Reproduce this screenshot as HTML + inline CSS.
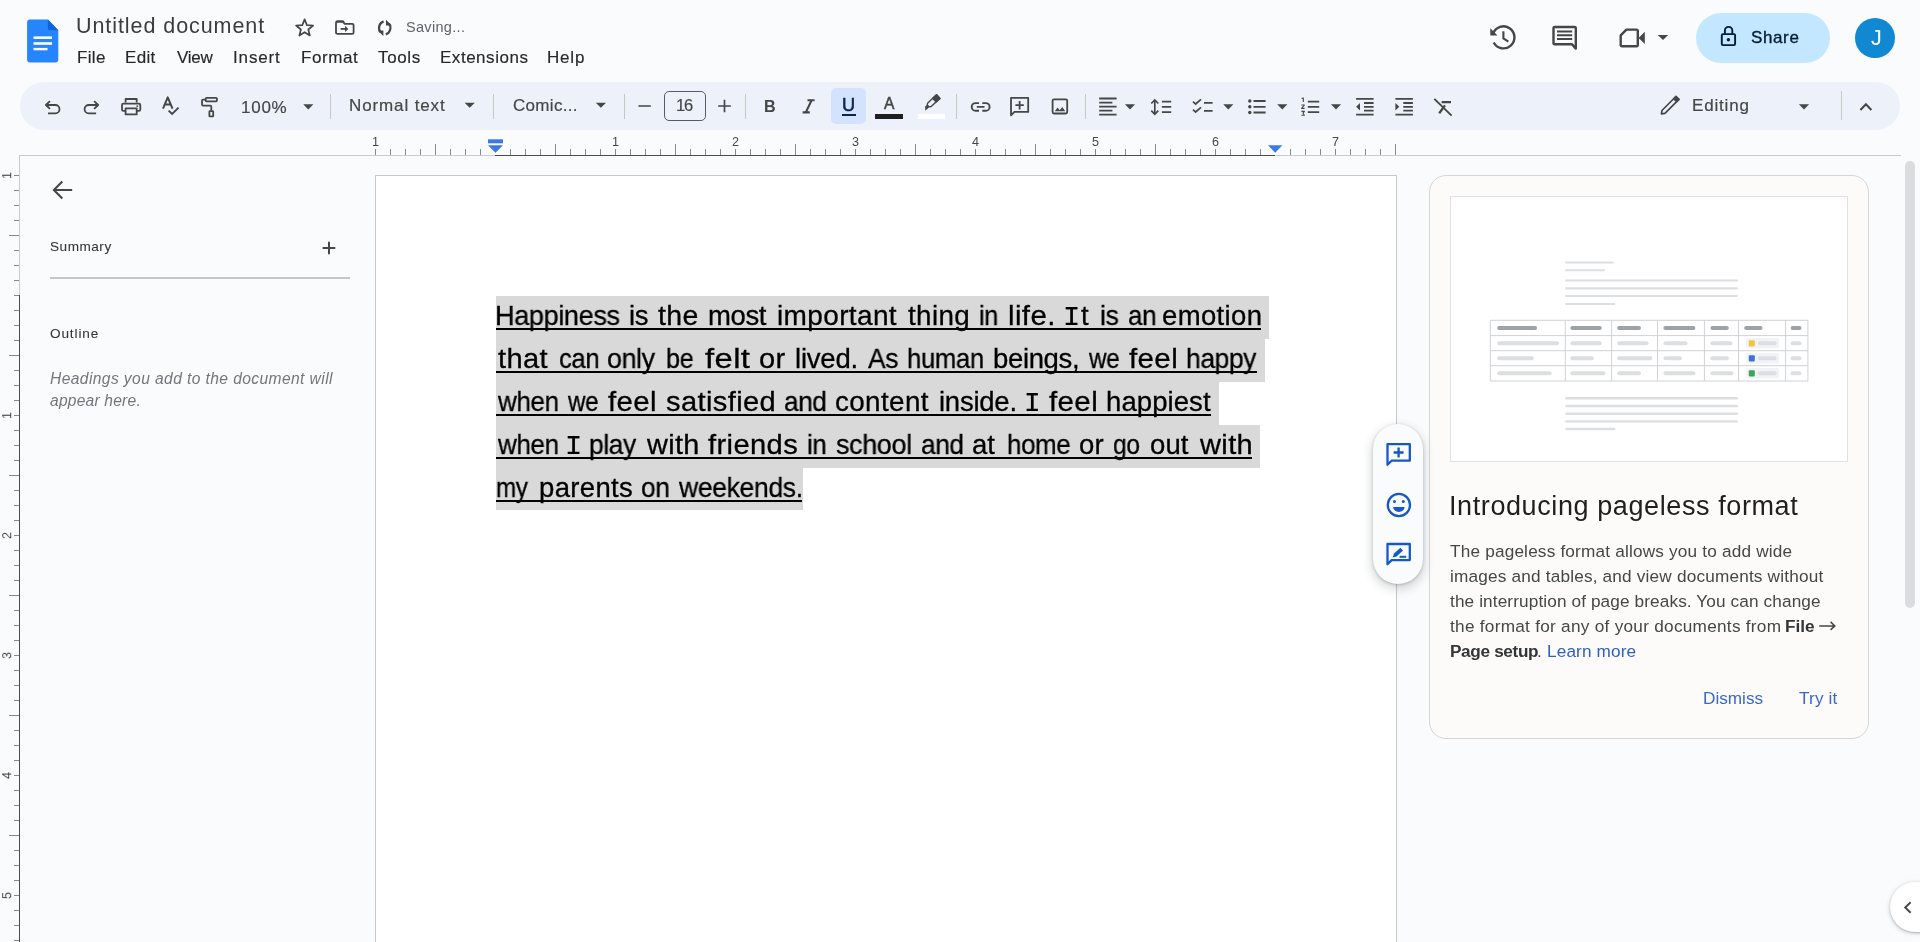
<!DOCTYPE html>
<html><head><meta charset="utf-8"><title>Untitled document - Google Docs</title>
<style>
*{margin:0;padding:0;box-sizing:border-box}
html,body{width:1920px;height:942px;overflow:hidden;background:#f9fbfd;font-family:"Liberation Sans",sans-serif}
.a{position:absolute}
.t{position:absolute;white-space:pre;line-height:1;font-family:"Liberation Sans",sans-serif;will-change:transform}
svg{position:absolute;overflow:visible}
.sep{position:absolute;width:1px;background:#c7c7c7}
</style></head><body>
<!-- toolbar pill -->
<div class="a" style="left:20px;top:82px;width:1880px;height:48px;border-radius:24px;background:#edf2fa"></div>
<!-- share + avatar -->
<div class="a" style="left:1696px;top:13px;width:134px;height:50px;border-radius:25px;background:#c2e7ff"></div>
<div class="a" style="left:1855px;top:18px;width:40px;height:40px;border-radius:20px;background:#1188d2"></div>
<!-- toolbar separators -->
<div class="sep" style="left:330px;top:94px;height:25px"></div>
<div class="sep" style="left:493px;top:94px;height:25px"></div>
<div class="sep" style="left:624px;top:94px;height:25px"></div>
<div class="sep" style="left:745px;top:94px;height:25px"></div>
<div class="sep" style="left:956px;top:94px;height:25px"></div>
<div class="sep" style="left:1085px;top:94px;height:25px"></div>
<div class="sep" style="left:1841px;top:91px;height:29px"></div>
<!-- font size box -->
<div class="a" style="left:664px;top:91px;width:42px;height:30px;border:1px solid #5a5d60;border-radius:5px"></div>
<!-- underline active bg -->
<div class="a" style="left:831px;top:88px;width:35px;height:36px;border-radius:5px;background:#d3e3fd"></div>
<!-- U underline, A bar, highlighter bar -->
<div class="a" style="left:841.6px;top:113.6px;width:14px;height:2.1px;background:#0a2350"></div>
<div class="a" style="left:875px;top:114px;width:28px;height:5px;background:#1f1f1f"></div>
<div class="a" style="left:917.5px;top:114.3px;width:27px;height:4.7px;background:#ffffff"></div>

<!-- ruler separator line -->
<div class="a" style="left:19px;top:155px;width:1882px;height:1px;background:#c9cccf"></div>
<svg style="left:0;top:0" width="1920" height="160" shape-rendering="crispEdges">
<rect x="495" y="155" width="780" height="1" fill="#4a4d50"/>
<rect x="375" y="149" width="1" height="6" fill="#85888c"/>
<rect x="390" y="149" width="1" height="6" fill="#85888c"/>
<rect x="405" y="149" width="1" height="6" fill="#85888c"/>
<rect x="420" y="149" width="1" height="6" fill="#85888c"/>
<rect x="435" y="144" width="1" height="11" fill="#85888c"/>
<rect x="450" y="149" width="1" height="6" fill="#85888c"/>
<rect x="465" y="149" width="1" height="6" fill="#85888c"/>
<rect x="480" y="149" width="1" height="6" fill="#85888c"/>
<rect x="510" y="149" width="1" height="6" fill="#85888c"/>
<rect x="525" y="149" width="1" height="6" fill="#85888c"/>
<rect x="540" y="149" width="1" height="6" fill="#85888c"/>
<rect x="555" y="144" width="1" height="11" fill="#85888c"/>
<rect x="570" y="149" width="1" height="6" fill="#85888c"/>
<rect x="585" y="149" width="1" height="6" fill="#85888c"/>
<rect x="600" y="149" width="1" height="6" fill="#85888c"/>
<rect x="615" y="149" width="1" height="6" fill="#85888c"/>
<rect x="630" y="149" width="1" height="6" fill="#85888c"/>
<rect x="645" y="149" width="1" height="6" fill="#85888c"/>
<rect x="660" y="149" width="1" height="6" fill="#85888c"/>
<rect x="675" y="144" width="1" height="11" fill="#85888c"/>
<rect x="690" y="149" width="1" height="6" fill="#85888c"/>
<rect x="705" y="149" width="1" height="6" fill="#85888c"/>
<rect x="720" y="149" width="1" height="6" fill="#85888c"/>
<rect x="735" y="149" width="1" height="6" fill="#85888c"/>
<rect x="750" y="149" width="1" height="6" fill="#85888c"/>
<rect x="765" y="149" width="1" height="6" fill="#85888c"/>
<rect x="780" y="149" width="1" height="6" fill="#85888c"/>
<rect x="795" y="144" width="1" height="11" fill="#85888c"/>
<rect x="810" y="149" width="1" height="6" fill="#85888c"/>
<rect x="825" y="149" width="1" height="6" fill="#85888c"/>
<rect x="840" y="149" width="1" height="6" fill="#85888c"/>
<rect x="855" y="149" width="1" height="6" fill="#85888c"/>
<rect x="870" y="149" width="1" height="6" fill="#85888c"/>
<rect x="885" y="149" width="1" height="6" fill="#85888c"/>
<rect x="900" y="149" width="1" height="6" fill="#85888c"/>
<rect x="915" y="144" width="1" height="11" fill="#85888c"/>
<rect x="930" y="149" width="1" height="6" fill="#85888c"/>
<rect x="945" y="149" width="1" height="6" fill="#85888c"/>
<rect x="960" y="149" width="1" height="6" fill="#85888c"/>
<rect x="975" y="149" width="1" height="6" fill="#85888c"/>
<rect x="990" y="149" width="1" height="6" fill="#85888c"/>
<rect x="1005" y="149" width="1" height="6" fill="#85888c"/>
<rect x="1020" y="149" width="1" height="6" fill="#85888c"/>
<rect x="1035" y="144" width="1" height="11" fill="#85888c"/>
<rect x="1050" y="149" width="1" height="6" fill="#85888c"/>
<rect x="1065" y="149" width="1" height="6" fill="#85888c"/>
<rect x="1080" y="149" width="1" height="6" fill="#85888c"/>
<rect x="1095" y="149" width="1" height="6" fill="#85888c"/>
<rect x="1110" y="149" width="1" height="6" fill="#85888c"/>
<rect x="1125" y="149" width="1" height="6" fill="#85888c"/>
<rect x="1140" y="149" width="1" height="6" fill="#85888c"/>
<rect x="1155" y="144" width="1" height="11" fill="#85888c"/>
<rect x="1170" y="149" width="1" height="6" fill="#85888c"/>
<rect x="1185" y="149" width="1" height="6" fill="#85888c"/>
<rect x="1200" y="149" width="1" height="6" fill="#85888c"/>
<rect x="1215" y="149" width="1" height="6" fill="#85888c"/>
<rect x="1230" y="149" width="1" height="6" fill="#85888c"/>
<rect x="1245" y="149" width="1" height="6" fill="#85888c"/>
<rect x="1260" y="149" width="1" height="6" fill="#85888c"/>
<rect x="1290" y="149" width="1" height="6" fill="#85888c"/>
<rect x="1305" y="149" width="1" height="6" fill="#85888c"/>
<rect x="1320" y="149" width="1" height="6" fill="#85888c"/>
<rect x="1335" y="149" width="1" height="6" fill="#85888c"/>
<rect x="1350" y="149" width="1" height="6" fill="#85888c"/>
<rect x="1365" y="149" width="1" height="6" fill="#85888c"/>
<rect x="1380" y="149" width="1" height="6" fill="#85888c"/>
<rect x="1395" y="144" width="1" height="11" fill="#85888c"/>
</svg>
<svg style="left:0;top:0" width="1920" height="160"><rect x="488" y="139.3" width="15" height="4" fill="#3c78e6"/><path d="M488 145.2H503L495.5 152.8Z" fill="#3c78e6"/><path d="M1268 145.2H1282.4L1275.2 152.8Z" fill="#3c78e6"/></svg>
<svg style="left:0;top:0" width="30" height="942" shape-rendering="crispEdges">
<rect x="19" y="155" width="1" height="140" fill="#c9cccf"/>
<rect x="19" y="295" width="1" height="650" fill="#4a4d50"/>
<rect x="14" y="175" width="5" height="1" fill="#85888c"/>
<rect x="14" y="190" width="5" height="1" fill="#85888c"/>
<rect x="14" y="205" width="5" height="1" fill="#85888c"/>
<rect x="14" y="220" width="5" height="1" fill="#85888c"/>
<rect x="9" y="235" width="10" height="1" fill="#85888c"/>
<rect x="14" y="250" width="5" height="1" fill="#85888c"/>
<rect x="14" y="265" width="5" height="1" fill="#85888c"/>
<rect x="14" y="280" width="5" height="1" fill="#85888c"/>
<rect x="14" y="295" width="5" height="1" fill="#85888c"/>
<rect x="14" y="310" width="5" height="1" fill="#85888c"/>
<rect x="14" y="325" width="5" height="1" fill="#85888c"/>
<rect x="14" y="340" width="5" height="1" fill="#85888c"/>
<rect x="9" y="355" width="10" height="1" fill="#85888c"/>
<rect x="14" y="370" width="5" height="1" fill="#85888c"/>
<rect x="14" y="385" width="5" height="1" fill="#85888c"/>
<rect x="14" y="400" width="5" height="1" fill="#85888c"/>
<rect x="14" y="415" width="5" height="1" fill="#85888c"/>
<rect x="14" y="430" width="5" height="1" fill="#85888c"/>
<rect x="14" y="445" width="5" height="1" fill="#85888c"/>
<rect x="14" y="460" width="5" height="1" fill="#85888c"/>
<rect x="9" y="475" width="10" height="1" fill="#85888c"/>
<rect x="14" y="490" width="5" height="1" fill="#85888c"/>
<rect x="14" y="505" width="5" height="1" fill="#85888c"/>
<rect x="14" y="520" width="5" height="1" fill="#85888c"/>
<rect x="14" y="535" width="5" height="1" fill="#85888c"/>
<rect x="14" y="550" width="5" height="1" fill="#85888c"/>
<rect x="14" y="565" width="5" height="1" fill="#85888c"/>
<rect x="14" y="580" width="5" height="1" fill="#85888c"/>
<rect x="9" y="595" width="10" height="1" fill="#85888c"/>
<rect x="14" y="610" width="5" height="1" fill="#85888c"/>
<rect x="14" y="625" width="5" height="1" fill="#85888c"/>
<rect x="14" y="640" width="5" height="1" fill="#85888c"/>
<rect x="14" y="655" width="5" height="1" fill="#85888c"/>
<rect x="14" y="670" width="5" height="1" fill="#85888c"/>
<rect x="14" y="685" width="5" height="1" fill="#85888c"/>
<rect x="14" y="700" width="5" height="1" fill="#85888c"/>
<rect x="9" y="715" width="10" height="1" fill="#85888c"/>
<rect x="14" y="730" width="5" height="1" fill="#85888c"/>
<rect x="14" y="745" width="5" height="1" fill="#85888c"/>
<rect x="14" y="760" width="5" height="1" fill="#85888c"/>
<rect x="14" y="775" width="5" height="1" fill="#85888c"/>
<rect x="14" y="790" width="5" height="1" fill="#85888c"/>
<rect x="14" y="805" width="5" height="1" fill="#85888c"/>
<rect x="14" y="820" width="5" height="1" fill="#85888c"/>
<rect x="9" y="835" width="10" height="1" fill="#85888c"/>
<rect x="14" y="850" width="5" height="1" fill="#85888c"/>
<rect x="14" y="865" width="5" height="1" fill="#85888c"/>
<rect x="14" y="880" width="5" height="1" fill="#85888c"/>
<rect x="14" y="895" width="5" height="1" fill="#85888c"/>
<rect x="14" y="910" width="5" height="1" fill="#85888c"/>
<rect x="14" y="925" width="5" height="1" fill="#85888c"/>
<rect x="14" y="940" width="5" height="1" fill="#85888c"/>
</svg>
<span class="t" style="left:0;top:0;font-size:12.6px;color:#444746;transform-origin:0 0;transform:translate(1.2px,179.0px) rotate(-90deg)">1</span>
<span class="t" style="left:0;top:0;font-size:12.6px;color:#444746;transform-origin:0 0;transform:translate(1.2px,419.0px) rotate(-90deg)">1</span>
<span class="t" style="left:0;top:0;font-size:12.6px;color:#444746;transform-origin:0 0;transform:translate(1.2px,539.0px) rotate(-90deg)">2</span>
<span class="t" style="left:0;top:0;font-size:12.6px;color:#444746;transform-origin:0 0;transform:translate(1.2px,659.0px) rotate(-90deg)">3</span>
<span class="t" style="left:0;top:0;font-size:12.6px;color:#444746;transform-origin:0 0;transform:translate(1.2px,779.0px) rotate(-90deg)">4</span>
<span class="t" style="left:0;top:0;font-size:12.6px;color:#444746;transform-origin:0 0;transform:translate(1.2px,899.0px) rotate(-90deg)">5</span>

<!-- page -->
<div class="a" style="left:375px;top:175px;width:1022px;height:800px;background:#fff;border:1px solid #c8c8c8"></div>
<!-- selection -->
<div class="a" style="left:496px;top:296px;width:772.5px;height:43px;background:#d9d9d9"></div>
<div class="a" style="left:496px;top:339px;width:769.3px;height:43px;background:#d9d9d9"></div>
<div class="a" style="left:496px;top:382px;width:723px;height:43px;background:#d9d9d9"></div>
<div class="a" style="left:496px;top:425px;width:764.4px;height:43px;background:#d9d9d9"></div>
<div class="a" style="left:496px;top:468px;width:307px;height:42px;background:#d9d9d9"></div>
<!-- underlines -->
<div class="a" style="left:496px;top:327.6px;width:765px;height:2px;background:#000"></div>
<div class="a" style="left:496px;top:370.6px;width:760.6px;height:2px;background:#000"></div>
<div class="a" style="left:496px;top:413.6px;width:715.2px;height:2px;background:#000"></div>
<div class="a" style="left:496px;top:456.6px;width:756px;height:2px;background:#000"></div>
<div class="a" style="left:496px;top:499.6px;width:306px;height:2px;background:#000"></div>

<!-- left panel divider -->
<div class="a" style="left:50px;top:276.6px;width:300px;height:2px;background:#c4c7c5"></div>

<!-- right card -->
<div class="a" style="left:1429px;top:175px;width:440px;height:564px;border:1px solid #d6d6d6;border-radius:17px;background:#fcfbfa"></div>
<div class="a" style="left:1450px;top:196px;width:398px;height:266px;border:1px solid #dfe1e4;background:#fff"></div>
<svg style="left:0;top:0" width="1920" height="942">
<rect x="1565.0" y="261.6" width="49.0" height="2" rx="1.0" fill="#dcdee1"/>
<rect x="1565.0" y="269.3" width="40.0" height="2" rx="1.0" fill="#dcdee1"/>
<rect x="1565.0" y="279.4" width="173.0" height="2.2" rx="1.1" fill="#dcdee1"/>
<rect x="1565.0" y="287.2" width="173.0" height="2.2" rx="1.1" fill="#dcdee1"/>
<rect x="1565.0" y="294.9" width="173.0" height="2.2" rx="1.1" fill="#dcdee1"/>
<rect x="1565.0" y="302.9" width="50.3" height="2.2" rx="1.1" fill="#dcdee1"/>
<rect x="1565.3" y="397.1" width="172.7" height="2.4" rx="1.2" fill="#dcdee1"/>
<rect x="1565.3" y="404.8" width="172.7" height="2.4" rx="1.2" fill="#dcdee1"/>
<rect x="1565.3" y="412.5" width="172.7" height="2.4" rx="1.2" fill="#dcdee1"/>
<rect x="1565.3" y="420.2" width="172.7" height="2.4" rx="1.2" fill="#dcdee1"/>
<rect x="1565.3" y="427.8" width="50.0" height="2.4" rx="1.2" fill="#dcdee1"/>
<rect x="1489.8" y="320.3" width="1" height="60.7" fill="#d0d2d5"/>
<rect x="1564.8" y="320.3" width="1" height="60.7" fill="#d0d2d5"/>
<rect x="1611.1" y="320.3" width="1" height="60.7" fill="#d0d2d5"/>
<rect x="1657.0" y="320.3" width="1" height="60.7" fill="#d0d2d5"/>
<rect x="1703.9" y="320.3" width="1" height="60.7" fill="#d0d2d5"/>
<rect x="1738.0" y="320.3" width="1" height="60.7" fill="#d0d2d5"/>
<rect x="1785.1" y="320.3" width="1" height="60.7" fill="#d0d2d5"/>
<rect x="1807.4" y="320.3" width="1" height="60.7" fill="#d0d2d5"/>
<rect x="1490.25" y="319.8" width="317.7" height="1" fill="#d0d2d5"/>
<rect x="1490.25" y="335.1" width="317.7" height="1" fill="#d0d2d5"/>
<rect x="1490.25" y="350.2" width="317.7" height="1" fill="#d0d2d5"/>
<rect x="1490.25" y="365.2" width="317.7" height="1" fill="#d0d2d5"/>
<rect x="1490.25" y="380.5" width="317.7" height="1" fill="#d0d2d5"/>
<rect x="1497.2" y="326.1" width="39.9" height="4" rx="2.0" fill="#9da2a7"/>
<rect x="1570.3" y="326.1" width="31.5" height="4" rx="2.0" fill="#9da2a7"/>
<rect x="1617.2" y="326.1" width="23.8" height="4" rx="2.0" fill="#9da2a7"/>
<rect x="1663.5" y="326.1" width="31.9" height="4" rx="2.0" fill="#9da2a7"/>
<rect x="1710.4" y="326.1" width="18.4" height="4" rx="2.0" fill="#9da2a7"/>
<rect x="1744.1" y="326.1" width="18.4" height="4" rx="2.0" fill="#9da2a7"/>
<rect x="1790.6" y="326.1" width="10.9" height="4" rx="2.0" fill="#9da2a7"/>
<rect x="1497.2" y="341.3" width="61.8" height="4" rx="2.0" fill="#dcdee1"/>
<rect x="1570.3" y="341.3" width="31.5" height="4" rx="2.0" fill="#dcdee1"/>
<rect x="1617.2" y="341.3" width="31.3" height="4" rx="2.0" fill="#dcdee1"/>
<rect x="1663.5" y="341.3" width="24.0" height="4" rx="2.0" fill="#dcdee1"/>
<rect x="1710.4" y="341.3" width="22.1" height="4" rx="2.0" fill="#dcdee1"/>
<rect x="1790.6" y="341.3" width="10.9" height="4" rx="2.0" fill="#dcdee1"/>
<rect x="1746.2" y="338.1" width="33" height="10.4" rx="2" fill="#f1f3f4"/>
<rect x="1748.8" y="340.2" width="6" height="6.2" rx="1" fill="#f5c344"/>
<rect x="1757.8" y="341.3" width="18.8" height="4" rx="2.0" fill="#dcdee1"/>
<rect x="1497.2" y="356.3" width="36.6" height="4" rx="2.0" fill="#dcdee1"/>
<rect x="1570.3" y="356.3" width="23.5" height="4" rx="2.0" fill="#dcdee1"/>
<rect x="1617.2" y="356.3" width="35.1" height="4" rx="2.0" fill="#dcdee1"/>
<rect x="1663.5" y="356.3" width="18.4" height="4" rx="2.0" fill="#dcdee1"/>
<rect x="1710.4" y="356.3" width="18.4" height="4" rx="2.0" fill="#dcdee1"/>
<rect x="1790.6" y="356.3" width="10.9" height="4" rx="2.0" fill="#dcdee1"/>
<rect x="1746.2" y="353.1" width="33" height="10.4" rx="2" fill="#f1f3f4"/>
<rect x="1748.8" y="355.2" width="6" height="6.2" rx="1" fill="#3f72d8"/>
<rect x="1757.8" y="356.3" width="18.8" height="4" rx="2.0" fill="#dcdee1"/>
<rect x="1497.2" y="371.3" width="54.4" height="4" rx="2.0" fill="#dcdee1"/>
<rect x="1570.3" y="371.3" width="35.1" height="4" rx="2.0" fill="#dcdee1"/>
<rect x="1617.2" y="371.3" width="23.8" height="4" rx="2.0" fill="#dcdee1"/>
<rect x="1663.5" y="371.3" width="31.9" height="4" rx="2.0" fill="#dcdee1"/>
<rect x="1710.4" y="371.3" width="23.0" height="4" rx="2.0" fill="#dcdee1"/>
<rect x="1790.6" y="371.3" width="10.9" height="4" rx="2.0" fill="#dcdee1"/>
<rect x="1746.2" y="368.1" width="33" height="10.4" rx="2" fill="#f1f3f4"/>
<rect x="1748.8" y="370.2" width="6" height="6.2" rx="1" fill="#3fa25c"/>
<rect x="1757.8" y="371.3" width="18.8" height="4" rx="2.0" fill="#dcdee1"/>
</svg>

<!-- floating pill -->
<div class="a" style="left:1373px;top:424px;width:50px;height:160px;border-radius:25px;background:#f9fbfd;box-shadow:0 1px 3px rgba(60,64,67,.30),0 4px 8px 3px rgba(60,64,67,.15)"></div>
<!-- scrollbar -->
<div class="a" style="left:1905px;top:161px;width:10px;height:447px;border-radius:5px;background:#dadce0"></div>
<!-- bottom right expand -->
<div class="a" style="left:1890px;top:882px;width:60px;height:50px;border-radius:25px;background:#fff;box-shadow:0 1px 2px rgba(60,64,67,.30),0 1px 4px 1px rgba(60,64,67,.14)"></div>

<svg style="left:0;top:0" width="1920" height="942" fill="none" stroke-linecap="butt" stroke-linejoin="round">
<!-- Docs logo -->
<path d="M30.1 19.6H47.9L58.3 30.2V59.5a3 3 0 0 1-3 3H30.1a3 3 0 0 1-3-3V22.6a3 3 0 0 1 3-3Z" fill="#2684fc"/>
<path d="M47.9 19.6L58.3 30.2H50.4a2.5 2.5 0 0 1-2.5-2.5Z" fill="#0b64d8"/>
<rect x="33.5" y="36.4" width="18.5" height="2.6" fill="#fff"/><rect x="33.5" y="42.2" width="18.5" height="2.6" fill="#fff"/><rect x="33.5" y="47.9" width="14" height="2.4" fill="#fff"/>

<g stroke="#444746" stroke-width="1.8">
<!-- star -->
<path d="M304.6 19.4L306.9 25.1L313.1 25.5L308.3 29.5L309.8 35.5L304.6 32.2L299.4 35.5L300.9 29.5L296.1 25.5L302.3 25.1Z" stroke-width="1.7" stroke-linejoin="round"/>
<!-- folder move -->
<path d="M336 23.2a1.4 1.4 0 0 1 1.4-1.4H342.8L344.8 23.9H352.2a1.4 1.4 0 0 1 1.4 1.4V32.4a1.4 1.4 0 0 1-1.4 1.4H337.4a1.4 1.4 0 0 1-1.4-1.4Z"/>
<path d="M336 22.6a1.6 1.6 0 0 1 1.6-1.6H342.4a1.6 1.6 0 0 1 1.6 1.6" stroke-width="1.4"/>
<path d="M340.6 28.9H346.5" stroke-width="1.8"/><path d="M345 25.8L348.4 28.9L345 32Z" fill="#444746" stroke="none"/>
<!-- sync -->
<path d="M383.6 21.4A7 7 0 0 0 380.6 32.4" stroke-width="2.2"/>
<path d="M377.6 30.4H383.4V36Z" fill="#444746" stroke="none"/>
<path d="M385.8 34.4A7 7 0 0 0 388.8 23.4" stroke-width="2.2"/>
<path d="M391.8 25.4H386V19.8Z" fill="#444746" stroke="none"/>

<!-- undo / redo -->
<path d="M50 101.1L45.9 105L50 108.9M46.2 105H55.3A4.2 4.2 0 0 1 55.3 113.4H48"/>
<path d="M94.1 101.1L98.2 105L94.1 108.9M97.9 105H88.8A4.2 4.2 0 0 0 88.8 113.4H96.1"/>
<!-- print -->
<path d="M125.6 102.6V99H136.7V102.6"/>
<path d="M125.6 110.8H123.4a1.4 1.4 0 0 1-1.4-1.4V105a1.4 1.4 0 0 1 1.4-1.4H138.9a1.4 1.4 0 0 1 1.4 1.4V109.4a1.4 1.4 0 0 1-1.4 1.4H136.7"/>
<rect x="125.6" y="108.3" width="11.1" height="6.1"/>
<circle cx="137.3" cy="106.2" r="0.9" fill="#444746" stroke="none"/>
<!-- spellcheck -->
<path d="M163 108.7L167.75 97.3L172.5 108.7M164.9 104.4H170.6" stroke-width="2" stroke-linejoin="round"/>
<path d="M168.6 110.6L172.1 114L178.6 107.6" stroke-width="1.9" stroke-linejoin="miter"/>
<!-- paint format -->
<rect x="205.7" y="97.8" width="11.2" height="3.6" rx="0.8"/>
<path d="M205.7 99.6H203a1 1 0 0 0-1 1V104.6a1 1 0 0 0 1 1H210.3a1 1 0 0 1 1 1V110.6"/>
<rect x="209.4" y="111.2" width="3.8" height="5.2" rx="0.5"/>

<!-- minus / plus -->
<path d="M638.4 106H650.8M718.2 106H730.8M724.5 99.8V112.3" stroke-width="1.7"/>
<!-- italic I -->
<path d="M807.5 100.2H814.6M802.6 112.4H809.8M811.6 100.2L805.8 112.4" stroke-width="2.1"/>
<!-- highlighter -->
<g transform="translate(931.2,103.1) rotate(47)">
<path d="M-2.5 -9.6H2.5V2.4L1.3 4.2H-1.3L-2.5 2.4Z" stroke-width="1.4"/>
<rect x="-2.5" y="-9.6" width="5" height="5.2" fill="#444746" stroke-width="1.4"/>
<path d="M-1.6 4.4H1.6V9.6L-1.6 6.8Z" fill="#444746" stroke="none"/>
</g>
<!-- link -->
<path d="M979 103.1H975.5A3.8 3.8 0 0 0 975.5 110.7H979M982.3 103.1H985.8A3.8 3.8 0 0 1 985.8 110.7H982.3M976.8 106.9H984.5" stroke-width="1.9"/>
<!-- add comment -->
<path d="M1011 97.8H1028.2V111.9H1014.4L1011 115.4Z"/>
<path d="M1015.4 105.2H1023.8M1019.6 101V109.4"/>
<!-- image -->
<rect x="1052.6" y="99.4" width="14.6" height="14.1" rx="1.4"/>
<path d="M1054.8 111.2L1057.6 107.6L1059.7 110.2L1062.3 106.9L1065.2 111.2Z" fill="#444746" stroke="none"/>
<!-- align -->
<path d="M1099.2 98.5H1116.6M1099.2 102.6H1112.4M1099.2 106.7H1116.6M1099.2 110.7H1112.4M1099.2 114.7H1116.6"/>
<!-- line spacing -->
<path d="M1154.8 101V113.2" stroke-width="1.7"/><path d="M1151.3 103.5L1154.8 100L1158.3 103.5M1151.3 110.7L1154.8 114.2L1158.3 110.7" stroke-width="1.7" stroke-linejoin="miter"/>
<path d="M1161.9 101.6H1171.2M1161.9 106.8H1171.2M1161.9 112.1H1171.2"/>
<!-- checklist -->
<path d="M1193 101.6L1195.6 104L1201 99.4M1193 109.6L1195.6 112L1201 107.4" stroke-width="1.7" stroke-linejoin="miter"/>
<path d="M1204 102.8H1212.6M1204 110.8H1212.6"/>
<!-- bullets -->
<path d="M1253.5 101H1265.6M1253.5 106.8H1265.6M1253.5 112.5H1265.6"/>
<g fill="#444746" stroke="none"><circle cx="1249.8" cy="101" r="1.7"/><circle cx="1249.8" cy="106.8" r="1.7"/><circle cx="1249.8" cy="112.5" r="1.7"/></g>
<!-- numbered -->
<path d="M1307.8 101.6H1319.2M1307.8 106.8H1319.2M1307.8 112.2H1319.2"/>
<path d="M1301.6 98.6L1303.3 98V102M1301.4 105H1304.4L1301.6 108.4H1304.6M1301.4 111.4H1304.4L1303 113.2L1304.4 115.2H1301.4" stroke-width="1.1"/>
<!-- decrease indent -->
<path d="M1356.1 98.8H1373.6M1356.1 114.7H1373.6M1364 103H1373.6M1364 106.8H1373.6M1364 110.6H1373.6"/>
<path d="M1360 103L1356.1 106.8L1360 110.6Z" fill="#444746" stroke="none"/>
<!-- increase indent -->
<path d="M1395.4 98.8H1412.9M1395.4 114.7H1412.9M1403.3 103H1412.9M1403.3 106.8H1412.9M1403.3 110.6H1412.9"/>
<path d="M1395.4 103L1399.3 106.8L1395.4 110.6Z" fill="#444746" stroke="none"/>
<!-- clear formatting -->
<path d="M1434.3 98.9L1451.6 115.6" stroke-width="1.9"/>
<path d="M1441.6 102.1H1451M1445 105.4L1439.2 113.2" stroke-width="2.3"/>
<!-- pencil -->
<g transform="translate(1669.5,105.9) rotate(45)">
<path d="M-2.1 -11.2H2.1V8.6L0 11.4L-2.1 8.6Z" stroke-width="1.7"/>
<rect x="-2.1" y="-11.2" width="4.2" height="3.2" fill="#444746" stroke-width="1.7"/>
</g>
<!-- chevron up -->
<path d="M1860.4 110L1865.9 104.2L1871.4 110" stroke-width="2" stroke-linejoin="miter"/>
<!-- left panel back arrow -->
<path d="M72.2 190H54.6M62.3 181.6L53.9 190L62.3 198.4" stroke-width="2.1" stroke-linejoin="miter"/>
<!-- plus (summary) -->
<path d="M322.6 248H335.3M329 241.7V254.3" stroke-width="2"/>
<!-- bottom right chevron -->
<path d="M1910.6 902.2L1905.2 907.5L1910.6 912.8" stroke-width="1.9" stroke-linejoin="miter"/>

<!-- history -->
<path d="M1493.1 33.6A11 11 0 1 1 1493.7 42.5" stroke-width="2.4"/>
<path d="M1490.3 28.2V35.4H1497.5Z" fill="#444746" stroke="none"/>
<path d="M1503.4 31.2V38.4L1508.4 41.6" stroke-width="2.1" stroke-linejoin="miter"/>
<!-- comment -->
<path d="M1554.6 27H1574.7a1.1 1.1 0 0 1 1.1 1.1V48.6L1572 44.3H1554.6a1.1 1.1 0 0 1-1.1-1.1V28.1a1.1 1.1 0 0 1 1.1-1.1Z" stroke-width="2.4"/>
<path d="M1557 31.6H1572.2M1557 35.3H1572.2M1557 38.9H1572.2" stroke-width="2"/>
<!-- camera -->
<path d="M1626.4 29.6H1636.4a1.4 1.4 0 0 1 1.4 1.4V44.8a1.4 1.4 0 0 1-1.4 1.4H1622.1a1.4 1.4 0 0 1-1.4-1.4V35.4Z" stroke-width="2.4"/>
<path d="M1638.6 38L1644.8 31.8V44Z" fill="#444746" stroke="none"/>
</g>

<!-- dropdown arrows -->
<g fill="#444746">
<path d="M303.2 104.3H313.4L308.3 109.4Z"/><path d="M464.6 102.7H474.8L469.7 107.8Z"/><path d="M595.8 102.7H606L600.9 107.8Z"/>
<path d="M1124.9 104.3H1135.1L1130 109.4Z"/><path d="M1223.2 104.3H1233.4L1228.3 109.4Z"/><path d="M1277.2 104.3H1287.4L1282.3 109.4Z"/><path d="M1330.9 104.3H1341.1L1336 109.4Z"/>
<path d="M1798.9 104.3H1809.1L1804 109.4Z"/><path d="M1657.8 34.9H1668.2L1663 40.1Z"/>
</g>

<!-- card arrow -->
<path d="M1819.2 625.9H1834.8M1830.6 621.9L1834.8 625.9L1830.6 629.9" stroke="#444746" stroke-width="1.5" fill="none" stroke-linejoin="miter"/>
<!-- lock -->
<g stroke="#001d35" stroke-width="1.9">
<rect x="1721.8" y="34.1" width="13.3" height="11" rx="1.2"/>
<path d="M1724.9 33.8V30.6A3.7 3.7 0 0 1 1732.3 30.6V33.8"/>
<circle cx="1728.4" cy="39.7" r="1.7" fill="#001d35" stroke="none"/>
</g>

<!-- floating pill icons -->
<g stroke="#1558c8" stroke-width="2.3">
<path d="M1387.5 444.1H1409.8V460.7H1391.6L1387.5 464.8Z"/>
<path d="M1393.6 452.5H1403.6M1398.6 447.5V457.5"/>
<circle cx="1398.9" cy="505" r="11.1"/>
<circle cx="1394.5" cy="501.4" r="1.5" fill="#1558c8" stroke="none"/><circle cx="1403.3" cy="501.4" r="1.5" fill="#1558c8" stroke="none"/>
<path d="M1393.2 507H1404.6A5.7 5 0 0 1 1393.2 507Z" fill="#1558c8" stroke="none"/>
<path d="M1387.5 544H1409.8V560.1H1391.6L1387.5 564.2Z"/>
<path d="M1392.6 557.4L1394 553.6L1400.4 547.8L1403 550.4L1396.6 556.4Z" fill="#1558c8" stroke="none"/>
<path d="M1399.6 556.8H1406.2" stroke-width="2"/>
</g>
</svg>

<span class="t m" style="left:76.00px;top:16.10px;font-size:21.5px;color:#3a3d40;letter-spacing:0.930px">Untitled document</span>
<span class="t m" style="left:77.00px;top:48.61px;font-size:17px;color:#26282b;letter-spacing:0.354px;-webkit-text-stroke:0.15px #26282b">File</span>
<span class="t m" style="left:125.20px;top:48.61px;font-size:17px;color:#26282b;letter-spacing:0.343px;-webkit-text-stroke:0.15px #26282b">Edit</span>
<span class="t m" style="left:176.70px;top:48.61px;font-size:17px;color:#26282b;letter-spacing:-0.221px;-webkit-text-stroke:0.15px #26282b">View</span>
<span class="t m" style="left:233.20px;top:48.61px;font-size:17px;color:#26282b;letter-spacing:0.861px;-webkit-text-stroke:0.15px #26282b">Insert</span>
<span class="t m" style="left:300.50px;top:48.61px;font-size:17px;color:#26282b;letter-spacing:0.577px;-webkit-text-stroke:0.15px #26282b">Format</span>
<span class="t m" style="left:378.30px;top:48.61px;font-size:17px;color:#26282b;letter-spacing:0.628px;-webkit-text-stroke:0.15px #26282b">Tools</span>
<span class="t m" style="left:439.80px;top:48.61px;font-size:17px;color:#26282b;letter-spacing:0.527px;-webkit-text-stroke:0.15px #26282b">Extensions</span>
<span class="t m" style="left:547.30px;top:48.61px;font-size:17px;color:#26282b;letter-spacing:0.797px;-webkit-text-stroke:0.15px #26282b">Help</span>
<span class="t m" style="left:406.30px;top:20.23px;font-size:14.5px;color:#5f6368;letter-spacing:0.313px">Saving...</span>
<span class="t m" style="left:240.70px;top:99.21px;font-size:17px;color:#444746;letter-spacing:0.745px;-webkit-text-stroke:0.2px #444746">100%</span>
<span class="t m" style="left:348.70px;top:97.01px;font-size:17px;color:#444746;letter-spacing:0.881px;-webkit-text-stroke:0.2px #444746">Normal text</span>
<span class="t m" style="left:512.50px;top:97.01px;font-size:17px;color:#444746;letter-spacing:0.312px;-webkit-text-stroke:0.2px #444746">Comic...</span>
<span class="t m" style="left:675.70px;top:97.43px;font-size:16.5px;color:#444746;letter-spacing:-1.077px;-webkit-text-stroke:0.2px #444746">16</span>
<span class="t m" style="left:1692.30px;top:97.01px;font-size:17px;color:#444746;letter-spacing:0.829px;-webkit-text-stroke:0.2px #444746">Editing</span>
<span class="t m" style="left:763.60px;top:98.09px;font-size:16.2px;color:#444746;font-weight:bold">B</span>
<span class="t m" style="left:842.20px;top:95.89px;font-size:18.2px;color:#0a2350;-webkit-text-stroke:0.55px #0a2350">U</span>
<span class="t m" style="left:883.65px;top:95.59px;font-size:15.6px;color:#444746;-webkit-text-stroke:0.5px #444746">A</span>
<span class="t m" style="left:1750.60px;top:29.31px;font-size:17px;color:#001d35;letter-spacing:0.623px;-webkit-text-stroke:0.35px #001d35">Share</span>
<span class="t m" style="left:1870.50px;top:28.00px;font-size:21.5px;color:#ffffff">J</span>
<span class="t m" style="left:50.30px;top:240.29px;font-size:13.6px;color:#34373a;letter-spacing:0.506px;-webkit-text-stroke:0.08px #34373a">Summary</span>
<span class="t m" style="left:50.30px;top:327.49px;font-size:13.6px;color:#34373a;letter-spacing:0.865px;-webkit-text-stroke:0.08px #34373a">Outline</span>
<span class="t m" style="left:50.30px;top:370.99px;font-size:15.6px;color:#73777b;letter-spacing:0.406px;font-style:italic">Headings you add to the document will</span>
<span class="t m" style="left:50.30px;top:392.59px;font-size:15.6px;color:#73777b;letter-spacing:0.209px;font-style:italic">appear here.</span>
<span class="t m" style="left:495.33px;top:302.32px;font-size:27.5px;color:#000000;letter-spacing:-0.400px;-webkit-text-stroke:0.3px #000000;transform-origin:0 0;transform:scaleX(0.9864)">Happiness</span>
<span class="t m" style="left:629.02px;top:302.32px;font-size:27.5px;color:#000000;letter-spacing:-0.400px;-webkit-text-stroke:0.3px #000000;transform-origin:0 0;transform:scaleX(0.9769)">is</span>
<span class="t m" style="left:658.30px;top:302.32px;font-size:27.5px;color:#000000;letter-spacing:0.350px;-webkit-text-stroke:0.3px #000000;transform-origin:0 0;transform:scaleX(1.0353)">the</span>
<span class="t m" style="left:708.20px;top:302.32px;font-size:27.5px;color:#000000;letter-spacing:-0.400px;-webkit-text-stroke:0.3px #000000;transform-origin:0 0;transform:scaleX(0.9956)">most</span>
<span class="t m" style="left:776.68px;top:302.32px;font-size:27.5px;color:#000000;letter-spacing:0.350px;-webkit-text-stroke:0.3px #000000;transform-origin:0 0;transform:scaleX(1.0189)">important</span>
<span class="t m" style="left:907.50px;top:302.32px;font-size:27.5px;color:#000000;letter-spacing:0.350px;-webkit-text-stroke:0.3px #000000;transform-origin:0 0;transform:scaleX(1.0111)">thing</span>
<span class="t m" style="left:979.09px;top:302.32px;font-size:27.5px;color:#000000;letter-spacing:-0.400px;-webkit-text-stroke:0.3px #000000;transform-origin:0 0;transform:scaleX(0.9140)">in</span>
<span class="t m" style="left:1008.13px;top:302.32px;font-size:27.5px;color:#000000;letter-spacing:0.350px;-webkit-text-stroke:0.3px #000000;transform-origin:0 0;transform:scaleX(1.0709)">life.</span>
<span class="t m" style="left:1063.32px;top:304.32px;font-size:27.5px;color:#000000;-webkit-text-stroke:0.2px #000000;font-family:'Liberation Mono',monospace;transform-origin:0 0;transform:scaleX(1.0417)">I</span>
<span class="t m" style="left:1081.10px;top:302.32px;font-size:27.5px;color:#000000;-webkit-text-stroke:0.3px #000000">t</span>
<span class="t m" style="left:1100.23px;top:302.32px;font-size:27.5px;color:#000000;letter-spacing:-0.400px;-webkit-text-stroke:0.3px #000000;transform-origin:0 0;transform:scaleX(0.9656)">is</span>
<span class="t m" style="left:1127.76px;top:302.32px;font-size:27.5px;color:#000000;letter-spacing:-0.400px;-webkit-text-stroke:0.3px #000000;transform-origin:0 0;transform:scaleX(0.9428)">an</span>
<span class="t m" style="left:1162.30px;top:302.32px;font-size:27.5px;color:#000000;letter-spacing:0.350px;-webkit-text-stroke:0.3px #000000">emotion</span>
<span class="t m" style="left:497.90px;top:345.32px;font-size:27.5px;color:#000000;letter-spacing:0.350px;-webkit-text-stroke:0.3px #000000;transform-origin:0 0;transform:scaleX(1.0576)">that</span>
<span class="t m" style="left:558.87px;top:345.32px;font-size:27.5px;color:#000000;letter-spacing:-0.400px;-webkit-text-stroke:0.3px #000000;transform-origin:0 0;transform:scaleX(0.9335)">can</span>
<span class="t m" style="left:607.32px;top:345.32px;font-size:27.5px;color:#000000;letter-spacing:-0.400px;-webkit-text-stroke:0.3px #000000;transform-origin:0 0;transform:scaleX(0.9753)">only</span>
<span class="t m" style="left:665.79px;top:345.32px;font-size:27.5px;color:#000000;letter-spacing:-0.400px;-webkit-text-stroke:0.3px #000000;transform-origin:0 0;transform:scaleX(0.9137)">be</span>
<span class="t m" style="left:704.60px;top:345.32px;font-size:27.5px;color:#000000;letter-spacing:0.350px;-webkit-text-stroke:0.3px #000000;transform-origin:0 0;transform:scaleX(1.1918)">felt</span>
<span class="t m" style="left:758.74px;top:345.32px;font-size:27.5px;color:#000000;letter-spacing:0.350px;-webkit-text-stroke:0.3px #000000;transform-origin:0 0;transform:scaleX(1.0573)">or</span>
<span class="t m" style="left:795.20px;top:345.32px;font-size:27.5px;color:#000000;letter-spacing:-0.212px;-webkit-text-stroke:0.3px #000000">lived.</span>
<span class="t m" style="left:868.20px;top:345.32px;font-size:27.5px;color:#000000;letter-spacing:-0.400px;-webkit-text-stroke:0.3px #000000;transform-origin:0 0;transform:scaleX(0.9599)">As</span>
<span class="t m" style="left:907.36px;top:345.32px;font-size:27.5px;color:#000000;letter-spacing:-0.400px;-webkit-text-stroke:0.3px #000000;transform-origin:0 0;transform:scaleX(0.9353)">human</span>
<span class="t m" style="left:993.40px;top:345.32px;font-size:27.5px;color:#000000;letter-spacing:-0.356px;-webkit-text-stroke:0.3px #000000">beings,</span>
<span class="t m" style="left:1088.98px;top:345.32px;font-size:27.5px;color:#000000;letter-spacing:-0.400px;-webkit-text-stroke:0.3px #000000;transform-origin:0 0;transform:scaleX(0.8827)">we</span>
<span class="t m" style="left:1129.20px;top:345.32px;font-size:27.5px;color:#000000;letter-spacing:0.350px;-webkit-text-stroke:0.3px #000000;transform-origin:0 0;transform:scaleX(1.0727)">feel</span>
<span class="t m" style="left:1186.14px;top:345.32px;font-size:27.5px;color:#000000;letter-spacing:-0.400px;-webkit-text-stroke:0.3px #000000;transform-origin:0 0;transform:scaleX(0.9604)">happy</span>
<span class="t m" style="left:497.85px;top:388.32px;font-size:27.5px;color:#000000;letter-spacing:-0.400px;-webkit-text-stroke:0.3px #000000;transform-origin:0 0;transform:scaleX(0.9463)">when</span>
<span class="t m" style="left:568.38px;top:388.32px;font-size:27.5px;color:#000000;letter-spacing:-0.400px;-webkit-text-stroke:0.3px #000000;transform-origin:0 0;transform:scaleX(0.8799)">we</span>
<span class="t m" style="left:608.30px;top:388.32px;font-size:27.5px;color:#000000;letter-spacing:0.350px;-webkit-text-stroke:0.3px #000000;transform-origin:0 0;transform:scaleX(1.0682)">feel</span>
<span class="t m" style="left:666.00px;top:388.32px;font-size:27.5px;color:#000000;letter-spacing:0.350px;-webkit-text-stroke:0.3px #000000;transform-origin:0 0;transform:scaleX(1.0587)">satisfied</span>
<span class="t m" style="left:783.85px;top:388.32px;font-size:27.5px;color:#000000;letter-spacing:-0.400px;-webkit-text-stroke:0.3px #000000;transform-origin:0 0;transform:scaleX(0.9489)">and</span>
<span class="t m" style="left:835.19px;top:388.32px;font-size:27.5px;color:#000000;letter-spacing:0.350px;-webkit-text-stroke:0.3px #000000;transform-origin:0 0;transform:scaleX(1.0124)">content</span>
<span class="t m" style="left:939.00px;top:388.32px;font-size:27.5px;color:#000000;letter-spacing:-0.242px;-webkit-text-stroke:0.3px #000000">inside.</span>
<span class="t m" style="left:1024.18px;top:390.32px;font-size:27.5px;color:#000000;-webkit-text-stroke:0.2px #000000;font-family:'Liberation Mono',monospace;transform-origin:0 0;transform:scaleX(1.0083)">I</span>
<span class="t m" style="left:1048.70px;top:388.32px;font-size:27.5px;color:#000000;letter-spacing:0.350px;-webkit-text-stroke:0.3px #000000;transform-origin:0 0;transform:scaleX(1.0727)">feel</span>
<span class="t m" style="left:1106.10px;top:388.32px;font-size:27.5px;color:#000000;letter-spacing:0.081px;-webkit-text-stroke:0.3px #000000">happiest</span>
<span class="t m" style="left:497.85px;top:431.32px;font-size:27.5px;color:#000000;letter-spacing:-0.400px;-webkit-text-stroke:0.3px #000000;transform-origin:0 0;transform:scaleX(0.9463)">when</span>
<span class="t m" style="left:565.42px;top:433.32px;font-size:27.5px;color:#000000;-webkit-text-stroke:0.2px #000000;font-family:'Liberation Mono',monospace;transform-origin:0 0;transform:scaleX(1.0417)">I</span>
<span class="t m" style="left:589.44px;top:431.32px;font-size:27.5px;color:#000000;letter-spacing:-0.400px;-webkit-text-stroke:0.3px #000000;transform-origin:0 0;transform:scaleX(0.9588)">play</span>
<span class="t m" style="left:647.25px;top:431.32px;font-size:27.5px;color:#000000;letter-spacing:0.350px;-webkit-text-stroke:0.3px #000000;transform-origin:0 0;transform:scaleX(1.0491)">with</span>
<span class="t m" style="left:708.30px;top:431.32px;font-size:27.5px;color:#000000;letter-spacing:0.350px;-webkit-text-stroke:0.3px #000000;transform-origin:0 0;transform:scaleX(1.0609)">friends</span>
<span class="t m" style="left:807.36px;top:431.32px;font-size:27.5px;color:#000000;letter-spacing:-0.400px;-webkit-text-stroke:0.3px #000000;transform-origin:0 0;transform:scaleX(0.9353)">in</span>
<span class="t m" style="left:836.30px;top:431.32px;font-size:27.5px;color:#000000;letter-spacing:-0.400px;-webkit-text-stroke:0.3px #000000;transform-origin:0 0;transform:scaleX(0.9819)">school</span>
<span class="t m" style="left:921.15px;top:431.32px;font-size:27.5px;color:#000000;letter-spacing:-0.400px;-webkit-text-stroke:0.3px #000000;transform-origin:0 0;transform:scaleX(0.9535)">and</span>
<span class="t m" style="left:972.20px;top:431.32px;font-size:27.5px;color:#000000;letter-spacing:-0.094px;-webkit-text-stroke:0.3px #000000">at</span>
<span class="t m" style="left:1006.66px;top:431.32px;font-size:27.5px;color:#000000;letter-spacing:-0.400px;-webkit-text-stroke:0.3px #000000;transform-origin:0 0;transform:scaleX(0.9427)">home</span>
<span class="t m" style="left:1079.20px;top:431.32px;font-size:27.5px;color:#000000;letter-spacing:0.306px;-webkit-text-stroke:0.3px #000000">or</span>
<span class="t m" style="left:1113.21px;top:431.32px;font-size:27.5px;color:#000000;letter-spacing:-0.400px;-webkit-text-stroke:0.3px #000000;transform-origin:0 0;transform:scaleX(0.8895)">go</span>
<span class="t m" style="left:1149.80px;top:431.32px;font-size:27.5px;color:#000000;letter-spacing:0.106px;-webkit-text-stroke:0.3px #000000">out</span>
<span class="t m" style="left:1200.46px;top:431.32px;font-size:27.5px;color:#000000;letter-spacing:0.350px;-webkit-text-stroke:0.3px #000000;transform-origin:0 0;transform:scaleX(1.0552)">with</span>
<span class="t m" style="left:496.42px;top:474.32px;font-size:27.5px;color:#000000;letter-spacing:-0.400px;-webkit-text-stroke:0.3px #000000;transform-origin:0 0;transform:scaleX(0.8787)">my</span>
<span class="t m" style="left:539.00px;top:474.32px;font-size:27.5px;color:#000000;letter-spacing:0.350px;-webkit-text-stroke:0.3px #000000">parents</span>
<span class="t m" style="left:641.15px;top:474.32px;font-size:27.5px;color:#000000;letter-spacing:-0.400px;-webkit-text-stroke:0.3px #000000;transform-origin:0 0;transform:scaleX(0.9536)">on</span>
<span class="t m" style="left:679.47px;top:474.32px;font-size:27.5px;color:#000000;letter-spacing:-0.400px;-webkit-text-stroke:0.3px #000000;transform-origin:0 0;transform:scaleX(0.9669)">weekends.</span>
<span class="t m" style="left:1448.60px;top:492.94px;font-size:27px;color:#1f1f1f;letter-spacing:0.597px">Introducing pageless format</span>
<span class="t m" style="left:1449.90px;top:543.24px;font-size:17.2px;color:#444746;letter-spacing:0.187px">The pageless format allows you to add wide</span>
<span class="t m" style="left:1449.60px;top:568.24px;font-size:17.2px;color:#444746;letter-spacing:0.187px">images and tables, and view documents without</span>
<span class="t m" style="left:1449.90px;top:593.04px;font-size:17.2px;color:#444746;letter-spacing:0.120px">the interruption of page breaks. You can change</span>
<span class="t m" style="left:1449.90px;top:618.04px;font-size:17.2px;color:#444746;letter-spacing:0.275px">the format for any of your documents from</span>
<span class="t m" style="left:1784.90px;top:618.04px;font-size:17.2px;color:#333537;letter-spacing:-0.050px;font-weight:bold">File</span>
<span class="t m" style="left:1449.60px;top:643.24px;font-size:17.2px;color:#333537;letter-spacing:-0.344px;font-weight:bold">Page setup</span>
<span class="t m" style="left:1537.40px;top:643.24px;font-size:17.2px;color:#444746">.</span>
<span class="t m" style="left:1547.00px;top:643.24px;font-size:17.2px;color:#2f5fc4;letter-spacing:0.130px">Learn more</span>
<span class="t m" style="left:1702.80px;top:690.14px;font-size:17.2px;color:#3a68c8;letter-spacing:-0.009px">Dismiss</span>
<span class="t m" style="left:1798.90px;top:690.14px;font-size:17.2px;color:#3a68c8;letter-spacing:0.146px">Try it</span>
<span class="t m" style="left:371.90px;top:135.73px;font-size:12.6px;color:#444746">1</span>
<span class="t m" style="left:612.10px;top:135.73px;font-size:12.6px;color:#444746">1</span>
<span class="t m" style="left:732.00px;top:135.73px;font-size:12.6px;color:#444746">2</span>
<span class="t m" style="left:852.00px;top:135.73px;font-size:12.6px;color:#444746">3</span>
<span class="t m" style="left:972.00px;top:135.73px;font-size:12.6px;color:#444746">4</span>
<span class="t m" style="left:1092.00px;top:135.73px;font-size:12.6px;color:#444746">5</span>
<span class="t m" style="left:1212.00px;top:135.73px;font-size:12.6px;color:#444746">6</span>
<span class="t m" style="left:1332.00px;top:135.73px;font-size:12.6px;color:#444746">7</span>
</body></html>
